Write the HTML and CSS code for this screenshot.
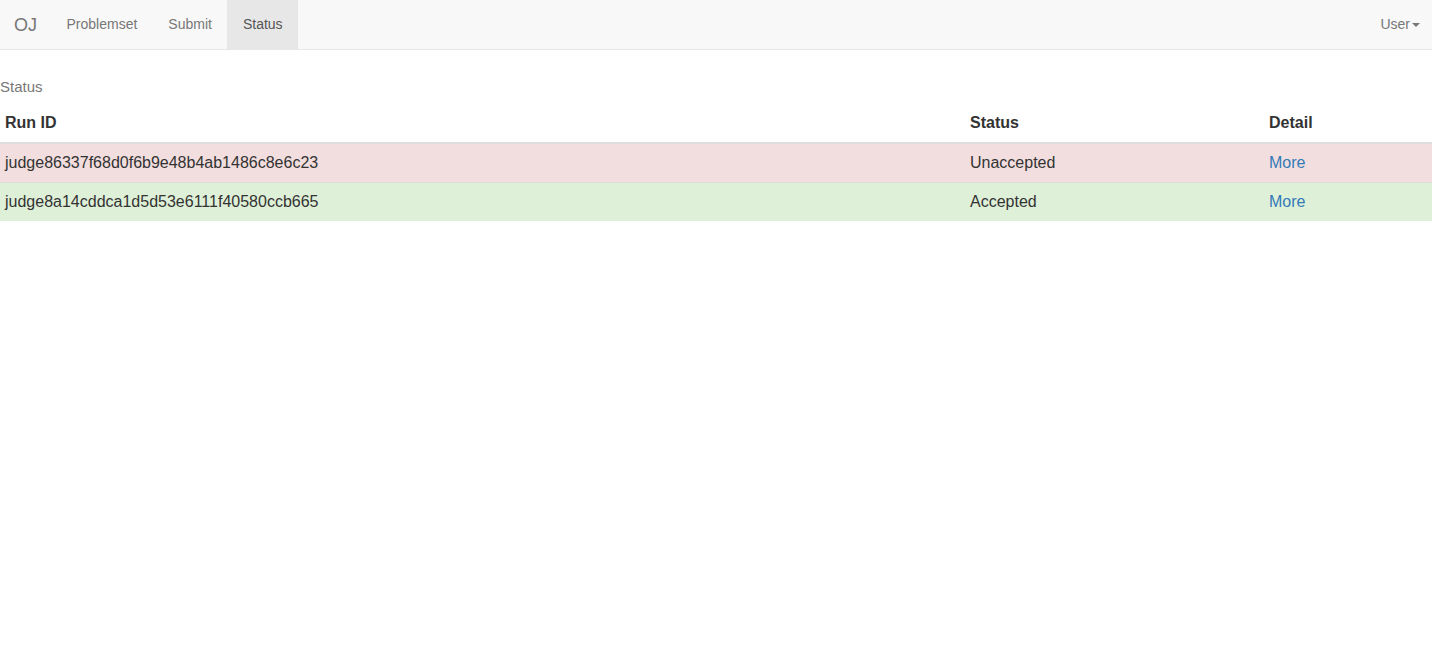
FILE: index.html
```html
<!DOCTYPE html>
<html>
<head>
<meta charset="utf-8">
<title>OJ Status</title>
<link rel="stylesheet" href="styles.css">
</head>
<body>
<nav class="navbar">
  <a class="brand" href="#">OJ</a>
  <ul class="nav">
    <li><a href="#">Problemset</a></li>
    <li><a href="#">Submit</a></li>
    <li class="active"><a href="#">Status</a></li>
  </ul>
  <ul class="nav nav-right">
    <li><a href="#">User<span class="caret"></span></a></li>
  </ul>
</nav>
<table class="table">
  <caption>Status</caption>
  <colgroup>
    <col class="c1"><col class="c2"><col class="c3">
  </colgroup>
  <thead>
    <tr><th>Run ID</th><th>Status</th><th>Detail</th></tr>
  </thead>
  <tbody>
    <tr class="danger"><td>judge86337f68d0f6b9e48b4ab1486c8e6c23</td><td>Unaccepted</td><td><a href="#">More</a></td></tr>
    <tr class="success"><td>judge8a14cddca1d5d53e6111f40580ccb665</td><td>Accepted</td><td><a href="#">More</a></td></tr>
  </tbody>
</table>
</body>
</html>
```
FILE: styles.css
```css
* { box-sizing: border-box; }
html, body { margin: 0; padding: 0; }
body {
  font-family: "Liberation Sans", Arial, Helvetica, sans-serif;
  font-size: 14px;
  line-height: 1.42857143;
  color: #333;
  background: #fff;
}
a { text-decoration: none; }

.navbar {
  display: flex;
  align-items: stretch;
  height: 50px;
  background: #f8f8f8;
  border-bottom: 1px solid #e7e7e7;
  margin-bottom: 20px;
}
.brand {
  display: block;
  padding: 15px 14px 15px 14px;
  font-size: 18px;
  line-height: 20px;
  height: 49px;
  color: #777;
}
.nav {
  display: flex;
  list-style: none;
  margin: 0;
  padding: 0;
}
.nav li a {
  display: block;
  padding: 15px 15.5px;
  line-height: 19px;
  height: 49px;
  color: #777;
}
.nav li.active a {
  background: #e7e7e7;
  color: #555;
}
.nav-right { margin-left: auto; }
.nav-right li a { padding-right: 12px; padding-left: 14px; }
.caret {
  display: inline-block;
  width: 0;
  height: 0;
  margin-left: 2px;
  vertical-align: middle;
  border-top: 4px solid #777;
  border-left: 4px solid transparent;
  border-right: 4px solid transparent;
}

.table {
  width: 100%;
  border-collapse: collapse;
  border-spacing: 0;
  font-size: 16px;
}
.table caption {
  padding: 6px 0 6px;
  font-size: 15px;
  line-height: 22px;
  text-align: left;
  color: #777;
}
.c1 { width: 965px; }
.c2 { width: 299px; }
.table th, .table td {
  padding: 8px 5px;
  text-align: left;
  vertical-align: top;
  line-height: 22px;
}
.table th {
  font-weight: bold;
  border-bottom: 2px solid #ddd;
  vertical-align: bottom;
}
.table td { border-top: 1px solid #ddd; }
.table thead + tbody tr:first-child td { border-top: 0; }
.table tr.danger td { background: #f2dede; }
.table tr.success td { background: #dff0d8; }
.table td a { color: #337ab7; }
```
